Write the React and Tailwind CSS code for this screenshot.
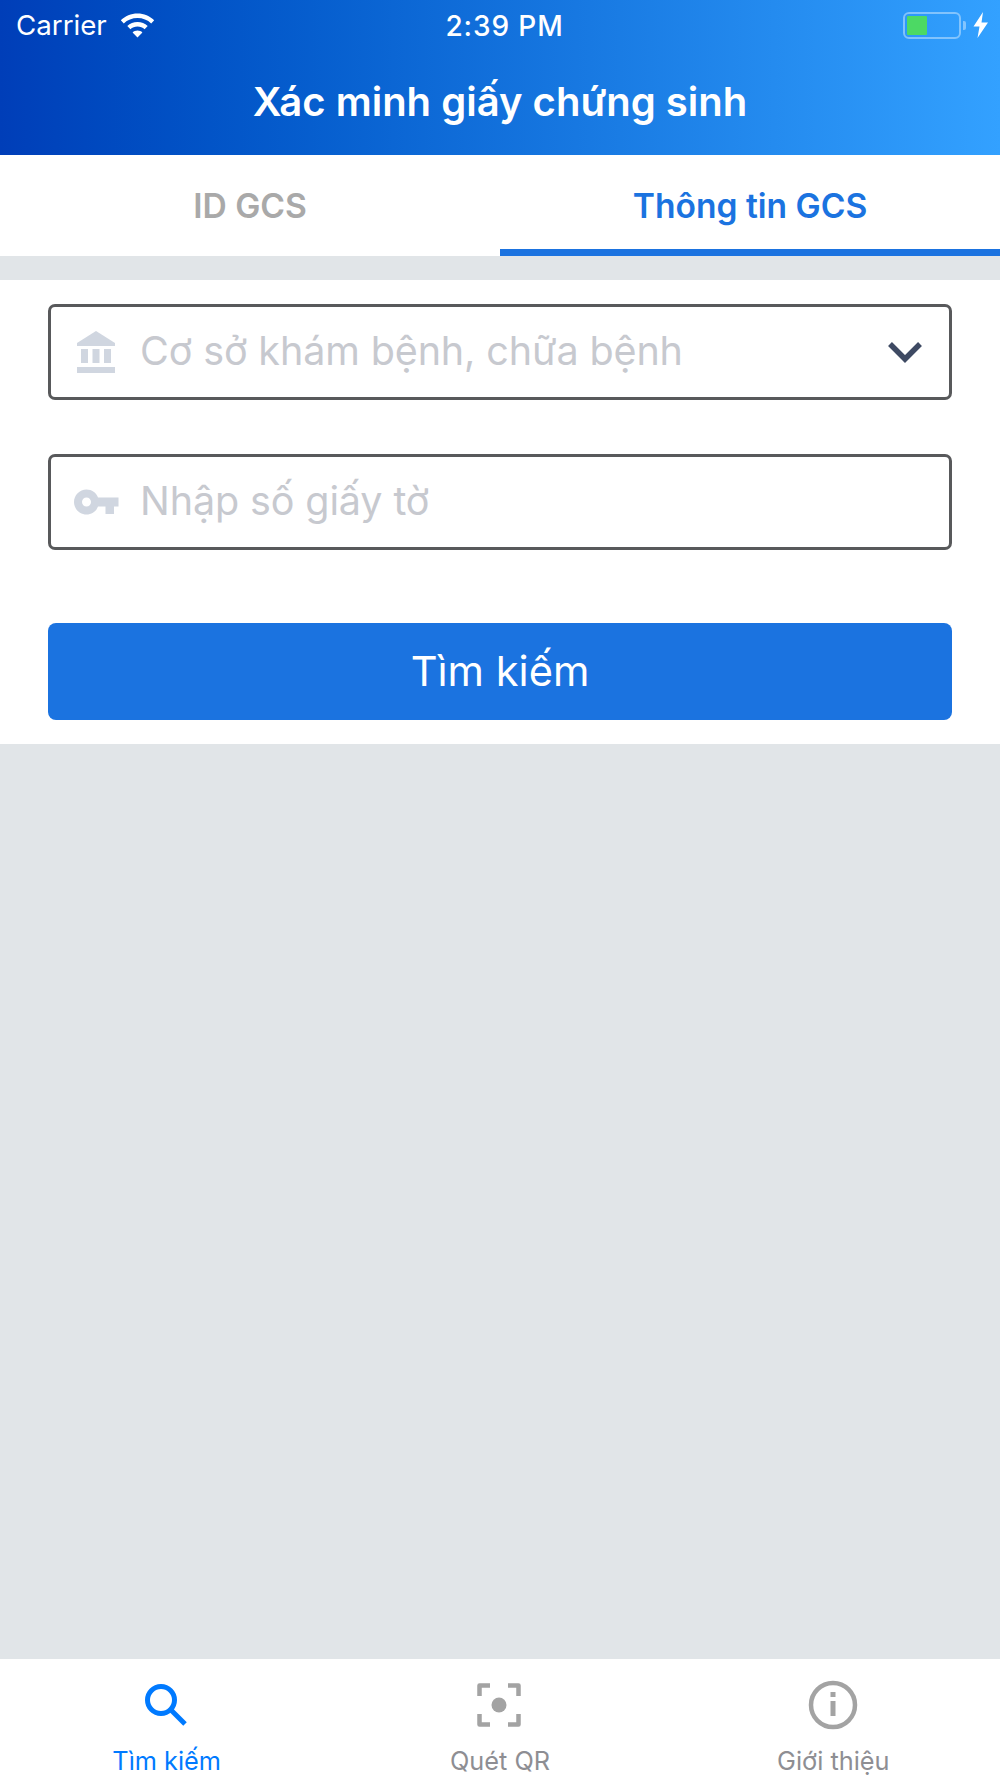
import React from "react";

const font = { fontFamily: "Inter, 'Noto Sans', sans-serif" };

function Wifi() {
  return (
    <svg width="35" height="26" viewBox="0 0 35 26" fill="#fff" className="ml-[13px]">
      <path d="M17.5 0.5C11 0.5 5.2 3 0.8 7.2L3.8 10.4C7.4 7 12.2 5 17.5 5C22.8 5 27.6 7 31.2 10.4L34.2 7.2C29.8 3 24 0.5 17.5 0.5Z" />
      <path d="M17.5 9C13.6 9 10 10.5 7.3 13L10.4 16.2C12.3 14.5 14.8 13.5 17.5 13.5C20.2 13.5 22.7 14.5 24.6 16.2L27.7 13C25 10.5 21.4 9 17.5 9Z" />
      <path d="M17.5 17.5C15.6 17.5 13.9 18.2 12.6 19.4L17.5 24.5L22.4 19.4C21.1 18.2 19.4 17.5 17.5 17.5Z" />
    </svg>
  );
}

function Battery() {
  return (
    <div className="flex items-center">
      <div className="w-[58px] h-[27px] rounded-[6px] border-[2px] border-[#ffffff66] p-[2px] flex">
        <div className="w-[20px] bg-[#4cd964] rounded-[1px]"></div>
      </div>
      <div className="w-[3px] h-[9px] ml-[2px] bg-[#ffffff66] rounded-r-[2px]"></div>
      <svg width="16" height="26" viewBox="0 0 16 26" fill="#fff" className="ml-[7px]">
        <path d="M10 0L0.5 14.5H6.5L4.5 26L15 10.5H8.5L10 0Z" />
      </svg>
    </div>
  );
}

function Bank() {
  return (
    <svg width="40" height="42" viewBox="0 0 40 42" fill="#d0d6e0">
      <path d="M20 0L39 12V15H1V12L20 0Z" />
      <rect x="5" y="18" width="7" height="14" />
      <rect x="16.5" y="18" width="7" height="14" />
      <rect x="28" y="18" width="7" height="14" />
      <rect x="1" y="36" width="38" height="6" />
    </svg>
  );
}

function Key() {
  return (
    <svg width="45" height="26" viewBox="0 0 45 26" fill="#d0d6e0">
      <path fillRule="evenodd" d="M12.5 0.5C17.8 0.5 22.3 3.7 24 8.5H44.5V17.5H40V25H31.5V17.5H24C22.3 22.3 17.8 25.5 12.5 25.5C5.6 25.5 0 19.9 0 13C0 6.1 5.6 0.5 12.5 0.5ZM12.5 8.5C10 8.5 8 10.5 8 13C8 15.5 10 17.5 12.5 17.5C15 17.5 17 15.5 17 13C17 10.5 15 8.5 12.5 8.5Z" />
    </svg>
  );
}

function Field({ icon, text, chevron }) {
  return (
    <div className="h-[96px] rounded-[7px] border-[3.5px] border-[#58595b] bg-white flex items-center">
      <div className="shrink-0 flex justify-center items-center w-[89px] pl-[1px]">{icon}</div>
      <span className="text-[39.5px] tracking-[-0.12px] text-[#c7c9cf] leading-none flex-1 whitespace-nowrap">{text}</span>
      {chevron && (
        <svg width="34" height="22" viewBox="0 0 34 22" fill="none" stroke="#3e4a63" strokeWidth="5.5" className="mr-[27px]">
          <path d="M2 3L17 18L32 3" />
        </svg>
      )}
    </div>
  );
}

function TabItem({ icon, label, active }) {
  return (
    <div className="flex-1 flex flex-col items-center">
      <div className="h-[54px] flex items-center justify-center">{icon}</div>
      <span className={`mt-[14px] text-[25.3px] leading-[29px] whitespace-nowrap ${active ? "text-[#007aff]" : "text-[#8e8e93]"}`}>{label}</span>
    </div>
  );
}

export default function App() {
  return (
    <div style={font} className="w-[1000px] h-[1778px] flex flex-col bg-[#e1e5e8] overflow-hidden">
      <header className="h-[155px] shrink-0 bg-gradient-to-r from-[#003eb8] to-[#33a1ff] text-white flex flex-col">
        <div className="h-[52px] px-[16px] flex items-center justify-between relative">
          <div className="flex items-center">
            <span className="text-[27.7px] leading-none">Carrier</span>
            <Wifi />
          </div>
          <span className="absolute left-[9px] right-0 text-center text-[28px] tracking-[0.9px] font-medium leading-none">2:39 PM</span>
          <div className="-mr-[5px] -mt-[2px]"><Battery /></div>
        </div>
        <div className="flex-1 flex items-start justify-center pt-[27px]">
          <h1 className="text-[40px] font-semibold leading-[46px]">Xác minh giấy chứng sinh</h1>
        </div>
      </header>

      <nav className="h-[101px] shrink-0 bg-white flex">
        <div className="flex-1 flex items-center justify-center pt-[2px]">
          <span className="text-[33.6px] font-semibold text-[#a9a9a9]">ID GCS</span>
        </div>
        <div className="flex-1 flex items-center justify-center border-b-[7px] border-[#1b73e0] pt-[9px]">
          <span className="text-[33.6px] font-semibold text-[#1b73e0]">Thông tin GCS</span>
        </div>
      </nav>

      <section className="mt-[24px] h-[464px] shrink-0 bg-white px-[48px] pt-[24px] flex flex-col">
        <Field icon={<Bank />} text="Cơ sở khám bệnh, chữa bệnh" chevron />
        <div className="mt-[54px]">
          <Field icon={<Key />} text="Nhập số giấy tờ" />
        </div>
        <button className="mt-[73px] h-[97px] rounded-[8px] bg-[#1b73e0] text-white text-[41.6px] leading-none flex items-center justify-center">Tìm kiếm</button>
      </section>

      <div className="flex-1"></div>

      <footer className="h-[119px] shrink-0 bg-white flex pt-[19px]">
        <TabItem
          active
          label="Tìm kiếm"
          icon={
            <svg width="44" height="44" viewBox="0 0 44 44" fill="none" stroke="#007aff" strokeWidth="5" className="-ml-[2px]">
              <circle cx="17" cy="17" r="13.5" />
              <path d="M27 27L41 41" />
            </svg>
          }
        />
        <TabItem
          label="Quét QR"
          icon={
            <svg width="44" height="44" viewBox="0 0 44 44" fill="none" stroke="#a3a3a3" strokeWidth="4.5" strokeLinejoin="round" className="-ml-[2px]">
              <path d="M2.5 13V2.5H13" />
              <path d="M31 2.5H41.5V13" />
              <path d="M2.5 31V41.5H13" />
              <path d="M41.5 31V41.5H31" />
              <circle cx="22" cy="22" r="7.5" fill="#a3a3a3" stroke="none" />
            </svg>
          }
        />
        <TabItem
          label="Giới thiệu"
          icon={
            <svg width="50" height="50" viewBox="0 0 50 50" fill="none" stroke="#a3a3a3" strokeWidth="4.5">
              <circle cx="25" cy="25" r="22" />
              <rect x="22.5" y="12" width="5" height="5" fill="#a3a3a3" stroke="none" />
              <rect x="22.5" y="21" width="5" height="15" fill="#a3a3a3" stroke="none" />
            </svg>
          }
        />
      </footer>
    </div>
  );
}
